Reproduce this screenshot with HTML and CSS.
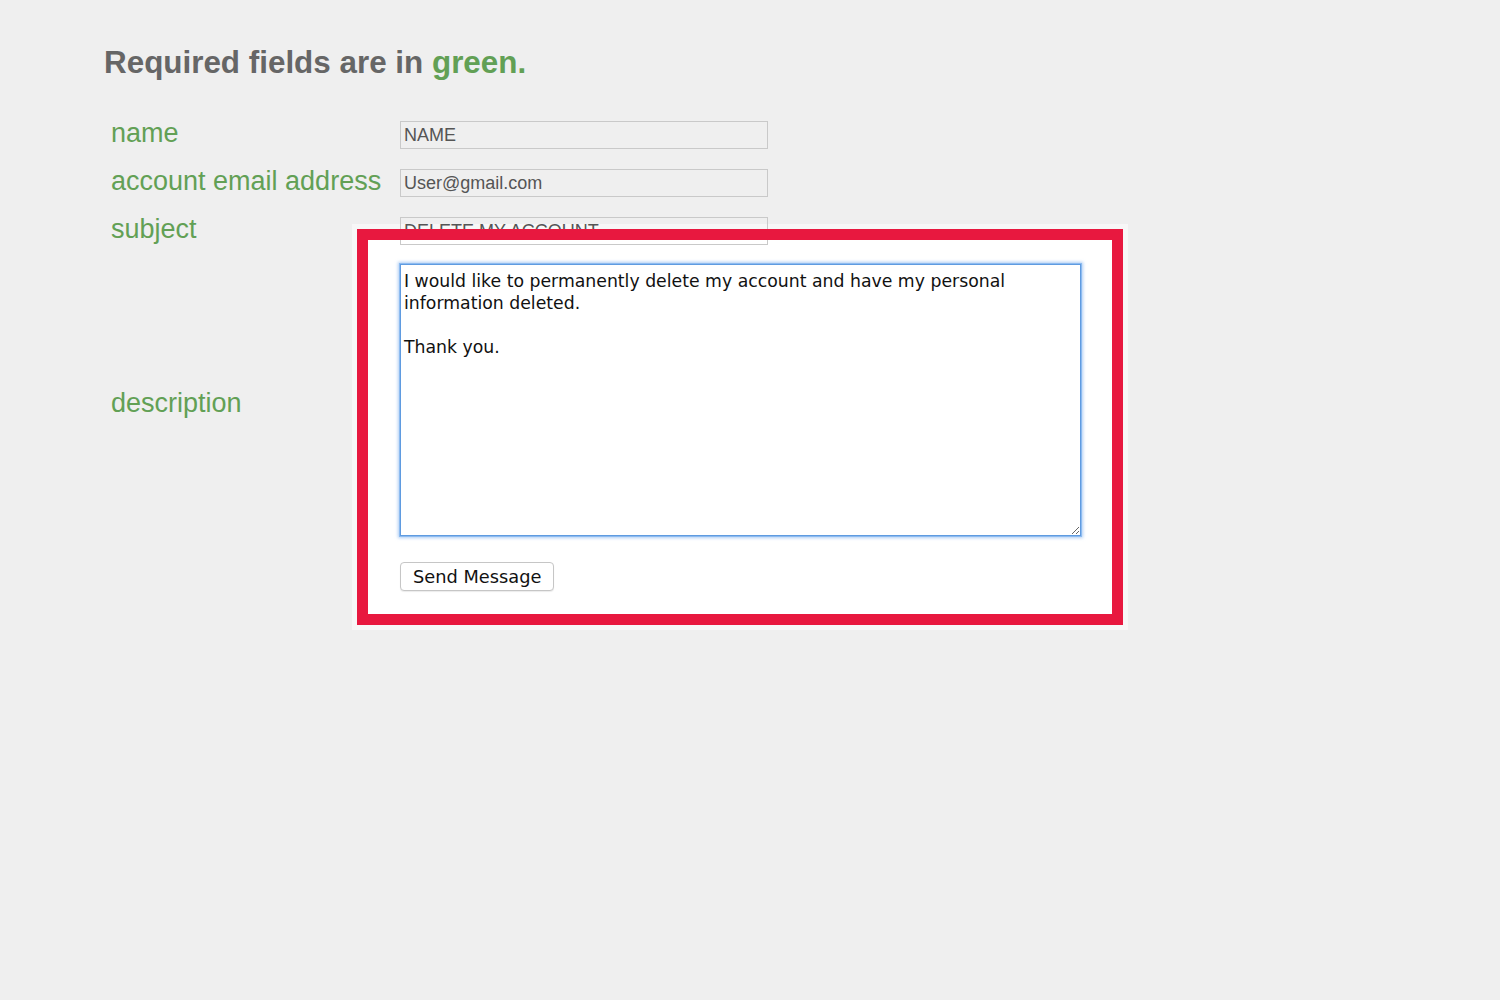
FILE: index.html
```html
<!DOCTYPE html>
<html lang="en">
<head>
  <meta charset="UTF-8" />
  <meta name="viewport" content="width=device-width, initial-scale=1.0"/>
  <title>Delete Account Request</title>
  <link rel="stylesheet" href="styles.css">
</head>
<body>
  <div class="page">
    <h1>Required fields are in <span class="req">green.</span></h1>

    <!-- white panel behind the message area, red frame drawn on top -->
    <div class="mark-fill"></div>

    <form class="contact">
      <label class="field-label" for="name">name</label>
      <input type="text" id="name" value="NAME" />

      <label class="field-label" for="email">account email address</label>
      <input type="text" id="email" value="User@gmail.com" />

      <label class="field-label" for="subject">subject</label>
      <input type="text" id="subject" value="DELETE MY ACCOUNT" />

      <label class="field-label desc-label" for="desc">description</label>
      <textarea id="desc">I would like to permanently delete my account and have my personal information deleted.

Thank you.</textarea>

      <span></span>
      <div class="actions">
        <button type="button">Send Message</button>
      </div>
    </form>

    <div class="mark"></div>
  </div>
</body>
</html>
```

FILE: styles.css
```css
body {
  margin: 0;
  background: #efefef;
  font-family: "Liberation Sans", Arial, sans-serif;
}
.page {
  position: relative;
  padding: 45px 0 0 104px;
  min-height: 955px;
}
h1 {
  margin: 0;
  font-size: 31.4px;
  font-weight: bold;
  color: #666;
}
.req {
  color: #62a055;
}
.contact {
  position: relative;
  z-index: 1;
  display: grid;
  grid-template-columns: 289px 682px;
  row-gap: 20px;
  align-items: start;
  margin: 40px 0 0 7px;
}
.field-label {
  font-size: 27px;
  line-height: 24px;
  color: #62a055;
}
.desc-label {
  align-self: center;
  padding-top: 5px;
}
input[type="text"] {
  box-sizing: border-box;
  width: 368px;
  height: 28px;
  margin: 0;
  padding: 0 3px;
  border: 1px solid #c9c9c9;
  background: transparent;
  font-family: "Liberation Sans", Arial, sans-serif;
  font-size: 18px;
  color: #555;
}
textarea {
  box-sizing: border-box;
  width: 681px;
  height: 272px;
  margin: -1px 0 0 0;
  padding: 5px 3px 2px;
  border: 1px solid #5f9be0;
  box-shadow: 0 0 0 1px #8dbbf0, 0 0 3px 2px rgba(110, 165, 235, 0.55);
  outline: none;
  background: #fff;
  font-family: "DejaVu Sans", sans-serif;
  font-size: 17.3px;
  line-height: 22px;
  color: #111;
}
.actions {
  margin-top: 6px;
}
button {
  box-sizing: border-box;
  height: 29px;
  padding: 0 12px;
  background: #fff;
  border: 1px solid #c6c6c6;
  border-radius: 4px;
  box-shadow: 0 1px 1px rgba(0,0,0,0.08);
  font-family: "DejaVu Sans", sans-serif;
  font-size: 17.8px;
  color: #111;
}
.mark-fill,
.mark {
  position: absolute;
  left: 357px;
  top: 229px;
  width: 766px;
  height: 396px;
  box-sizing: border-box;
}
.mark-fill {
  background: #fff;
  box-shadow: 0 0 0 5px #f7f7f7;
}
.mark {
  z-index: 2;
  border: 11px solid #e8183f;
  pointer-events: none;
}
```
